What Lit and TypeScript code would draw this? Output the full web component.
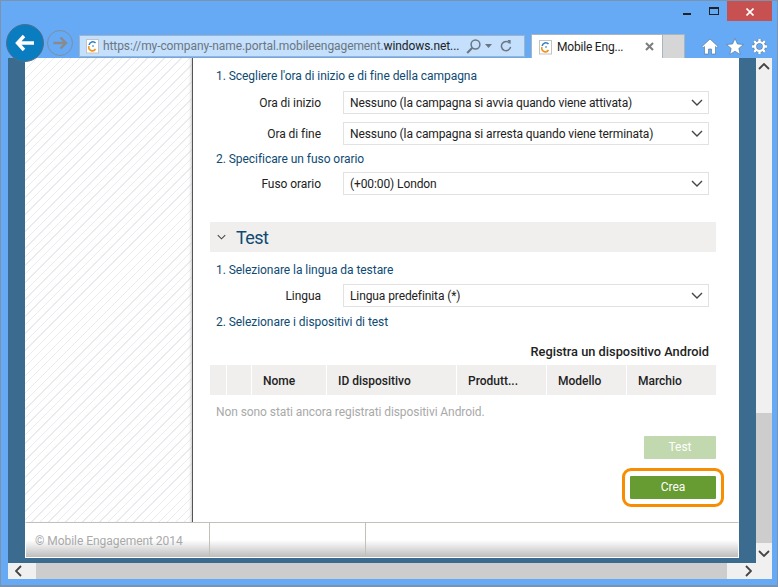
import { LitElement, html, css, svg } from 'lit';
import { customElement } from 'lit/decorators.js';

const favicon = html`<svg class="favicon" viewBox="0 0 16 16" width="16" height="16">
  <rect x="1.5" y="1.5" width="12" height="13.5" fill="#fff" stroke="#c4c4c4" />
  <path d="M10.5 5 A3.6 3.6 0 0 0 4.2 7" fill="none" stroke="#2f7fc4" stroke-width="1.6" />
  <path d="M4 8 A3.6 3.6 0 0 0 10.5 11" fill="none" stroke="#f0961f" stroke-width="1.6" />
  <path d="M7 8 H9" stroke="#2f7fc4" stroke-width="1.2" />
</svg>`;

const chevron = svg`<path d="M1 1 L6 6 L11 1" fill="none" stroke="#444" stroke-width="1.4" />`;

const selectBox = (value: string) => html`<div class="select">
  <span>${value}</span>
  <svg viewBox="0 0 12 7" width="12" height="7">${chevron}</svg>
</div>`;

const field = (label: string, value: string) => html`<div class="field">
  <label>${label}</label>
  ${selectBox(value)}
</div>`;

const gearPath = svg`<circle cx="8.5" cy="8.5" r="4.4" fill="none" /><path d="M8.5 1 V4 M8.5 13 V16 M1 8.5 H4 M13 8.5 H16 M3.2 3.2 L5.3 5.3 M11.7 11.7 L13.8 13.8 M13.8 3.2 L11.7 5.3 M5.3 11.7 L3.2 13.8" fill="none" />`;

@customElement('app-root')
export class AppRoot extends LitElement {
  static styles = css`
    :host {
      display: block;
      width: 778px;
      height: 587px;
      font-family: Roboto, 'Open Sans', sans-serif;
      font-size: 12px;
      color: #222;
    }
    .window {
      box-sizing: border-box;
      height: 587px;
      background: #66a9f5;
      border: 1px solid #7b93ad;
      border-bottom-width: 2px;
      display: flex;
      flex-direction: column;
    }
    .titlebar {
      height: 20px;
      display: flex;
      justify-content: flex-end;
      flex: none;
    }
    .wbtn {
      box-sizing: border-box;
      width: 27px;
      height: 20px;
      display: flex;
      align-items: center;
      justify-content: center;
    }
    .wbtn.min {
      padding-top: 6px;
    }
    .wbtn.close {
      background: #c75050;
      width: 45px;
      margin-right: 5px;
      padding-top: 2px;
    }
    .toolbar {
      height: 37px;
      flex: none;
      display: flex;
      align-items: flex-end;
      padding-left: 5px;
      position: relative;
      z-index: 1;
    }
    .back {
      width: 38px;
      height: 38px;
      box-sizing: border-box;
      border-radius: 50%;
      background: #0a7cc0;
      border: 1px solid #4f6f8c;
      display: flex;
      align-items: center;
      justify-content: center;
      margin-bottom: -4px;
      flex: none;
    }
    .forward {
      width: 26px;
      height: 26px;
      box-sizing: border-box;
      border-radius: 50%;
      border: 1px solid #7f8fa0;
      display: flex;
      align-items: center;
      justify-content: center;
      margin: 0 6px 2px 3px;
      flex: none;
    }
    .address {
      box-sizing: border-box;
      width: 446px;
      height: 22px;
      margin-bottom: 1px;
      background: #c4e0fd;
      border: 1px solid #9fb4c9;
      display: flex;
      align-items: center;
      padding: 0 12px 0 5px;
      flex: none;
    }
    .favicon {
      flex: none;
    }
    .url {
      margin-left: 2px;
      flex: 1;
      font-size: 12px;
      letter-spacing: -0.09px;
      color: #6b7680;
      white-space: nowrap;
      min-width: 0;
    }
    .url b {
      font-weight: 400;
      color: #222;
    }
    .addr-icons {
      display: flex;
      align-items: center;
      gap: 4px;
      flex: none;
      margin-left: 2px;
    }
    .refresh {
      margin-left: 4px;
    }
    .tab {
      box-sizing: border-box;
      width: 132px;
      height: 24px;
      margin-left: 6px;
      background: #fff;
      border: 1px solid #a7b4c2;
      border-bottom: none;
      display: flex;
      align-items: center;
      padding: 0 8px 0 6px;
      flex: none;
    }
    .tab span {
      margin-left: 3px;
      flex: 1;
      font-size: 12px;
      letter-spacing: -0.2px;
      white-space: nowrap;
    }
    .newtab {
      box-sizing: border-box;
      width: 22px;
      height: 24px;
      background: #d6d6d6;
      border: 1px solid #a7b4c2;
      border-left: none;
      border-bottom: none;
      flex: none;
    }
    .tools {
      display: flex;
      gap: 7px;
      margin: 0 0 3px 16px;
      align-items: center;
    }
    .viewport {
      flex: 1;
      margin: 0 5px 6px 7px;
      display: grid;
      grid-template-columns: 1fr 16px;
      grid-template-rows: 1fr 16px;
      min-height: 0;
      background: #3b6b8f;
    }
    .page {
      padding: 0 17px 5px 17px;
      display: flex;
      flex-direction: column;
      min-height: 0;
      min-width: 0;
    }
    .body {
      flex: 1;
      display: flex;
      min-height: 0;
      background: #fff;
    }
    .hatch {
      width: 167px;
      flex: none;
      background: repeating-linear-gradient(
        -45deg,
        #fff 0,
        #fff 5px,
        #e9ebf1 5px,
        #e9ebf1 6px
      );
      box-shadow: inset -3px 0 3px -2px #c9c9c9;
      border-right: 1px solid #555;
    }
    .main {
      flex: 1;
      padding: 9px 23px 0 17px;
      overflow: hidden;
    }
    h4 {
      margin: 0;
      font-weight: 400;
      font-size: 12px;
      line-height: 16px;
      padding-top: 1px;
      letter-spacing: -0.05px;
      color: #0e4a73;
      padding-left: 6px;
    }
    .field {
      display: flex;
      align-items: center;
      padding-right: 7px;
    }
    .field label {
      width: 111px;
      text-align: right;
      padding-right: 22px;
      flex: none;
      letter-spacing: -0.05px;
    }
    .select {
      box-sizing: border-box;
      flex: 1;
      height: 23px;
      border: 1px solid #e2e2e2;
      display: flex;
      align-items: center;
      justify-content: space-between;
      padding: 0 5px 0 6px;
      letter-spacing: -0.1px;
    }
    .campaign .field {
      margin-top: 8px;
    }
    .campaign h4 + .field {
      margin-top: 7px;
    }
    .campaign h4:not(:first-child) {
      margin-top: 5px;
    }
    .campaign h4:not(:first-child) + .field {
      margin-top: 5px;
    }
    .section-head {
      height: 30px;
      margin-top: 27px;
      background: #f0efee;
      display: flex;
      align-items: center;
      font-size: 18px;
      letter-spacing: -0.6px;
      color: #0e4a73;
      padding-left: 7px;
      gap: 10px;
    }
    .test-part {
      padding-top: 9px;
    }
    .test-part .field {
      margin-top: 6px;
    }
    .test-part h4 + .field + h4 {
      margin-top: 6px;
    }
    .register {
      text-align: right;
      font-weight: 500;
      font-size: 12.8px;
      padding-right: 7px;
      margin-top: 13px;
      line-height: 17px;
    }
    .thead {
      display: grid;
      grid-template-columns: 16px 24px 74px 129px 89px 79px 1fr;
      column-gap: 1px;
      margin-top: 5px;
      height: 30px;
    }
    .thead div {
      background: #f0efee;
      font-weight: 500;
      line-height: 30px;
      padding: 1px 0 0 11px;
      box-sizing: border-box;
      white-space: nowrap;
      overflow: hidden;
    }
    .empty {
      color: #a9a9a9;
      padding: 1px 0 0 6px;
      line-height: 16px;
      margin-top: 8px;
      letter-spacing: -0.08px;
    }
    .actions {
      display: flex;
      flex-direction: column;
      align-items: flex-end;
      margin-top: 16px;
    }
    .btn {
      color: #fff;
      text-align: center;
      height: 23px;
      line-height: 23px;
      border-radius: 1px;
    }
    .btn.test {
      width: 72px;
      background: #c2d8ae;
    }
    .highlight {
      box-sizing: border-box;
      margin: 9px -8px 0 0;
      padding: 5px;
      border: 3px solid #f78d00;
      border-radius: 9px;
    }
    .btn.create {
      width: 86px;
      background: #669c31;
    }
    .footer {
      height: 36px;
      flex: none;
      box-sizing: border-box;
      border-top: 1px solid #c3bfb9;
      border-bottom: 1px solid #fff;
      border-right: 1px solid #fff;
      border-left: 1px solid #fff;
      background: linear-gradient(#fff 0, #fff 50%, #bdbdbd 100%);
      display: grid;
      grid-template-columns: 184px 156px 1fr;
    }
    .footer div {
      border-right: 1px solid #c3bfb9;
      color: #a9a9a9;
      padding-left: 9px;
      line-height: 18px;
      padding-top: 9px;
      letter-spacing: -0.05px;
    }
    .footer div:last-child {
      border-right: none;
    }
    .vscroll {
      background: #cdcdcd;
      display: flex;
      flex-direction: column;
    }
    .thumb {
      background: #f0f0f0;
      flex: none;
      height: 338px;
    }
    .rest {
      background: #cdcdcd;
      flex: 1;
    }
    .arrow {
      height: 17px;
      width: 16px;
      flex: none;
      background: #f0f0f0;
      display: flex;
      align-items: center;
      justify-content: center;
    }
    .arrow.down {
      height: 20px;
    }
    .hscroll {
      grid-column: 1 / -1;
      background: #cdcdcd;
      display: flex;
      justify-content: space-between;
    }
    .hscroll .arrow {
      box-sizing: border-box;
      width: 28px;
      height: 16px;
      justify-content: flex-start;
      padding-left: 7px;
    }
    .hscroll .arrow.right {
      width: 45px;
      padding-left: 18px;
    }
  `;

  render() {
    return html`<div class="window">
      <div class="titlebar">
        <div class="wbtn min">
          <svg width="8" height="2" viewBox="0 0 8 2"><rect width="8" height="2" fill="#222" /></svg>
        </div>
        <div class="wbtn">
          <svg width="10" height="8" viewBox="0 0 10 8"><rect x="0.5" y="0.5" width="9" height="7" fill="none" stroke="#222" /><rect width="10" height="2" fill="#222" /></svg>
        </div>
        <div class="wbtn close">
          <svg width="8" height="8" viewBox="0 0 8 8"><path d="M0.5 0.5 L7.5 7.5 M7.5 0.5 L0.5 7.5" stroke="#fff" stroke-width="1.6" /></svg>
        </div>
      </div>
      <div class="toolbar">
        <div class="back">
          <svg width="22" height="20" viewBox="0 0 22 20"><path d="M10 3 L3.5 10 L10 17 M4 10 H20" fill="none" stroke="#fff" stroke-width="3.4" /></svg>
        </div>
        <div class="forward">
          <svg width="16" height="14" viewBox="0 0 16 14"><path d="M8.5 1.5 L14 7 L8.5 12.5 M14 7 H1.5" fill="none" stroke="#8a8a8a" stroke-width="2.4" /></svg>
        </div>
        <div class="address">
          ${favicon}
          <div class="url">https://my-company-name.portal.mobileengagement.<b>windows.net...</b></div>
          <div class="addr-icons">
            <svg width="15" height="15" viewBox="0 0 15 15"><circle cx="9.5" cy="5.5" r="4.4" fill="none" stroke="#6b7680" stroke-width="1.5" /><path d="M6.3 8.7 L1.2 14" stroke="#6b7680" stroke-width="2" /></svg>
            <svg width="7" height="4" viewBox="0 0 7 4"><path d="M0 0 H7 L3.5 4 Z" fill="#6b7680" /></svg>
            <svg class="refresh" width="12" height="14" viewBox="0 0 13 14"><path d="M10.5 4 A5 5 0 1 0 11.5 8" fill="none" stroke="#6b7680" stroke-width="1.6" /><path d="M8 0.5 L11.5 0.5 L11.5 5 Z" fill="#6b7680" /></svg>
          </div>
        </div>
        <div class="tab">
          ${favicon}
          <span>Mobile Eng...</span>
          <svg width="9" height="9" viewBox="0 0 9 9"><path d="M1 1 L8 8 M8 1 L1 8" stroke="#7d7d7d" stroke-width="2" /></svg>
        </div>
        <div class="newtab"></div>
        <div class="tools">
          <svg width="18" height="17" viewBox="0 0 18 17"><path d="M9 1 L1 8.5 L2.2 9.7 L3.5 8.5 V16 H7.5 V11 H10.5 V16 H14.5 V8.5 L15.8 9.7 L17 8.5 Z" fill="#fff" stroke="#4d6f8d" stroke-width="0.6" /></svg>
          <svg width="18" height="17" viewBox="0 0 18 17"><path d="M9 0.5 L11.4 6 L17.4 6.5 L12.8 10.4 L14.2 16.4 L9 13.2 L3.8 16.4 L5.2 10.4 L0.6 6.5 L6.6 6 Z" fill="#fff" stroke="#4d6f8d" stroke-width="0.6" /></svg>
          <svg width="17" height="17" viewBox="0 0 17 17"><g stroke="#4d6f8d" stroke-width="3.4">${gearPath}</g><g stroke="#fff" stroke-width="2.4">${gearPath}</g></svg>
        </div>
      </div>
      <div class="viewport">
        <div class="page">
          <div class="body">
            <div class="hatch"></div>
            <div class="main">
              <div class="campaign">
                <h4>1. Scegliere l'ora di inizio e di fine della campagna</h4>
                ${field('Ora di inizio', 'Nessuno (la campagna si avvia quando viene attivata)')}
                ${field('Ora di fine', 'Nessuno (la campagna si arresta quando viene terminata)')}
                <h4>2. Specificare un fuso orario</h4>
                ${field('Fuso orario', '(+00:00) London')}
              </div>
              <div class="section-head">
                <svg width="9" height="6" viewBox="0 0 12 7">${chevron}</svg>
                <span>Test</span>
              </div>
              <div class="test-part">
                <h4>1. Selezionare la lingua da testare</h4>
                ${field('Lingua', 'Lingua predefinita (*)')}
                <h4>2. Selezionare i dispositivi di test</h4>
                <div class="register">Registra un dispositivo Android</div>
                <div class="thead">
                  <div></div>
                  <div></div>
                  <div>Nome</div>
                  <div>ID dispositivo</div>
                  <div>Produtt...</div>
                  <div>Modello</div>
                  <div>Marchio</div>
                </div>
                <div class="empty">Non sono stati ancora registrati dispositivi Android.</div>
              </div>
              <div class="actions">
                <div class="btn test">Test</div>
                <div class="highlight"><div class="btn create">Crea</div></div>
              </div>
            </div>
          </div>
          <div class="footer">
            <div>© Mobile Engagement 2014</div>
            <div></div>
            <div></div>
          </div>
        </div>
        <div class="vscroll">
          <div class="arrow"><svg width="12" height="7" viewBox="0 0 12 7"><path d="M1 6 L6 1 L11 6" fill="none" stroke="#444" stroke-width="1.8" /></svg></div>
          <div class="thumb"></div>
          <div class="rest"></div>
          <div class="arrow down"><svg width="12" height="7" viewBox="0 0 12 7"><path d="M1 1 L6 6 L11 1" fill="none" stroke="#444" stroke-width="1.8" /></svg></div>
        </div>
        <div class="hscroll">
          <div class="arrow"><svg width="7" height="12" viewBox="0 0 7 12"><path d="M6 1 L1 6 L6 11" fill="none" stroke="#444" stroke-width="1.8" /></svg></div>
          <div class="arrow right"><svg width="7" height="12" viewBox="0 0 7 12"><path d="M1 1 L6 6 L1 11" fill="none" stroke="#444" stroke-width="1.8" /></svg></div>
        </div>
      </div>
    </div>`;
  }
}
